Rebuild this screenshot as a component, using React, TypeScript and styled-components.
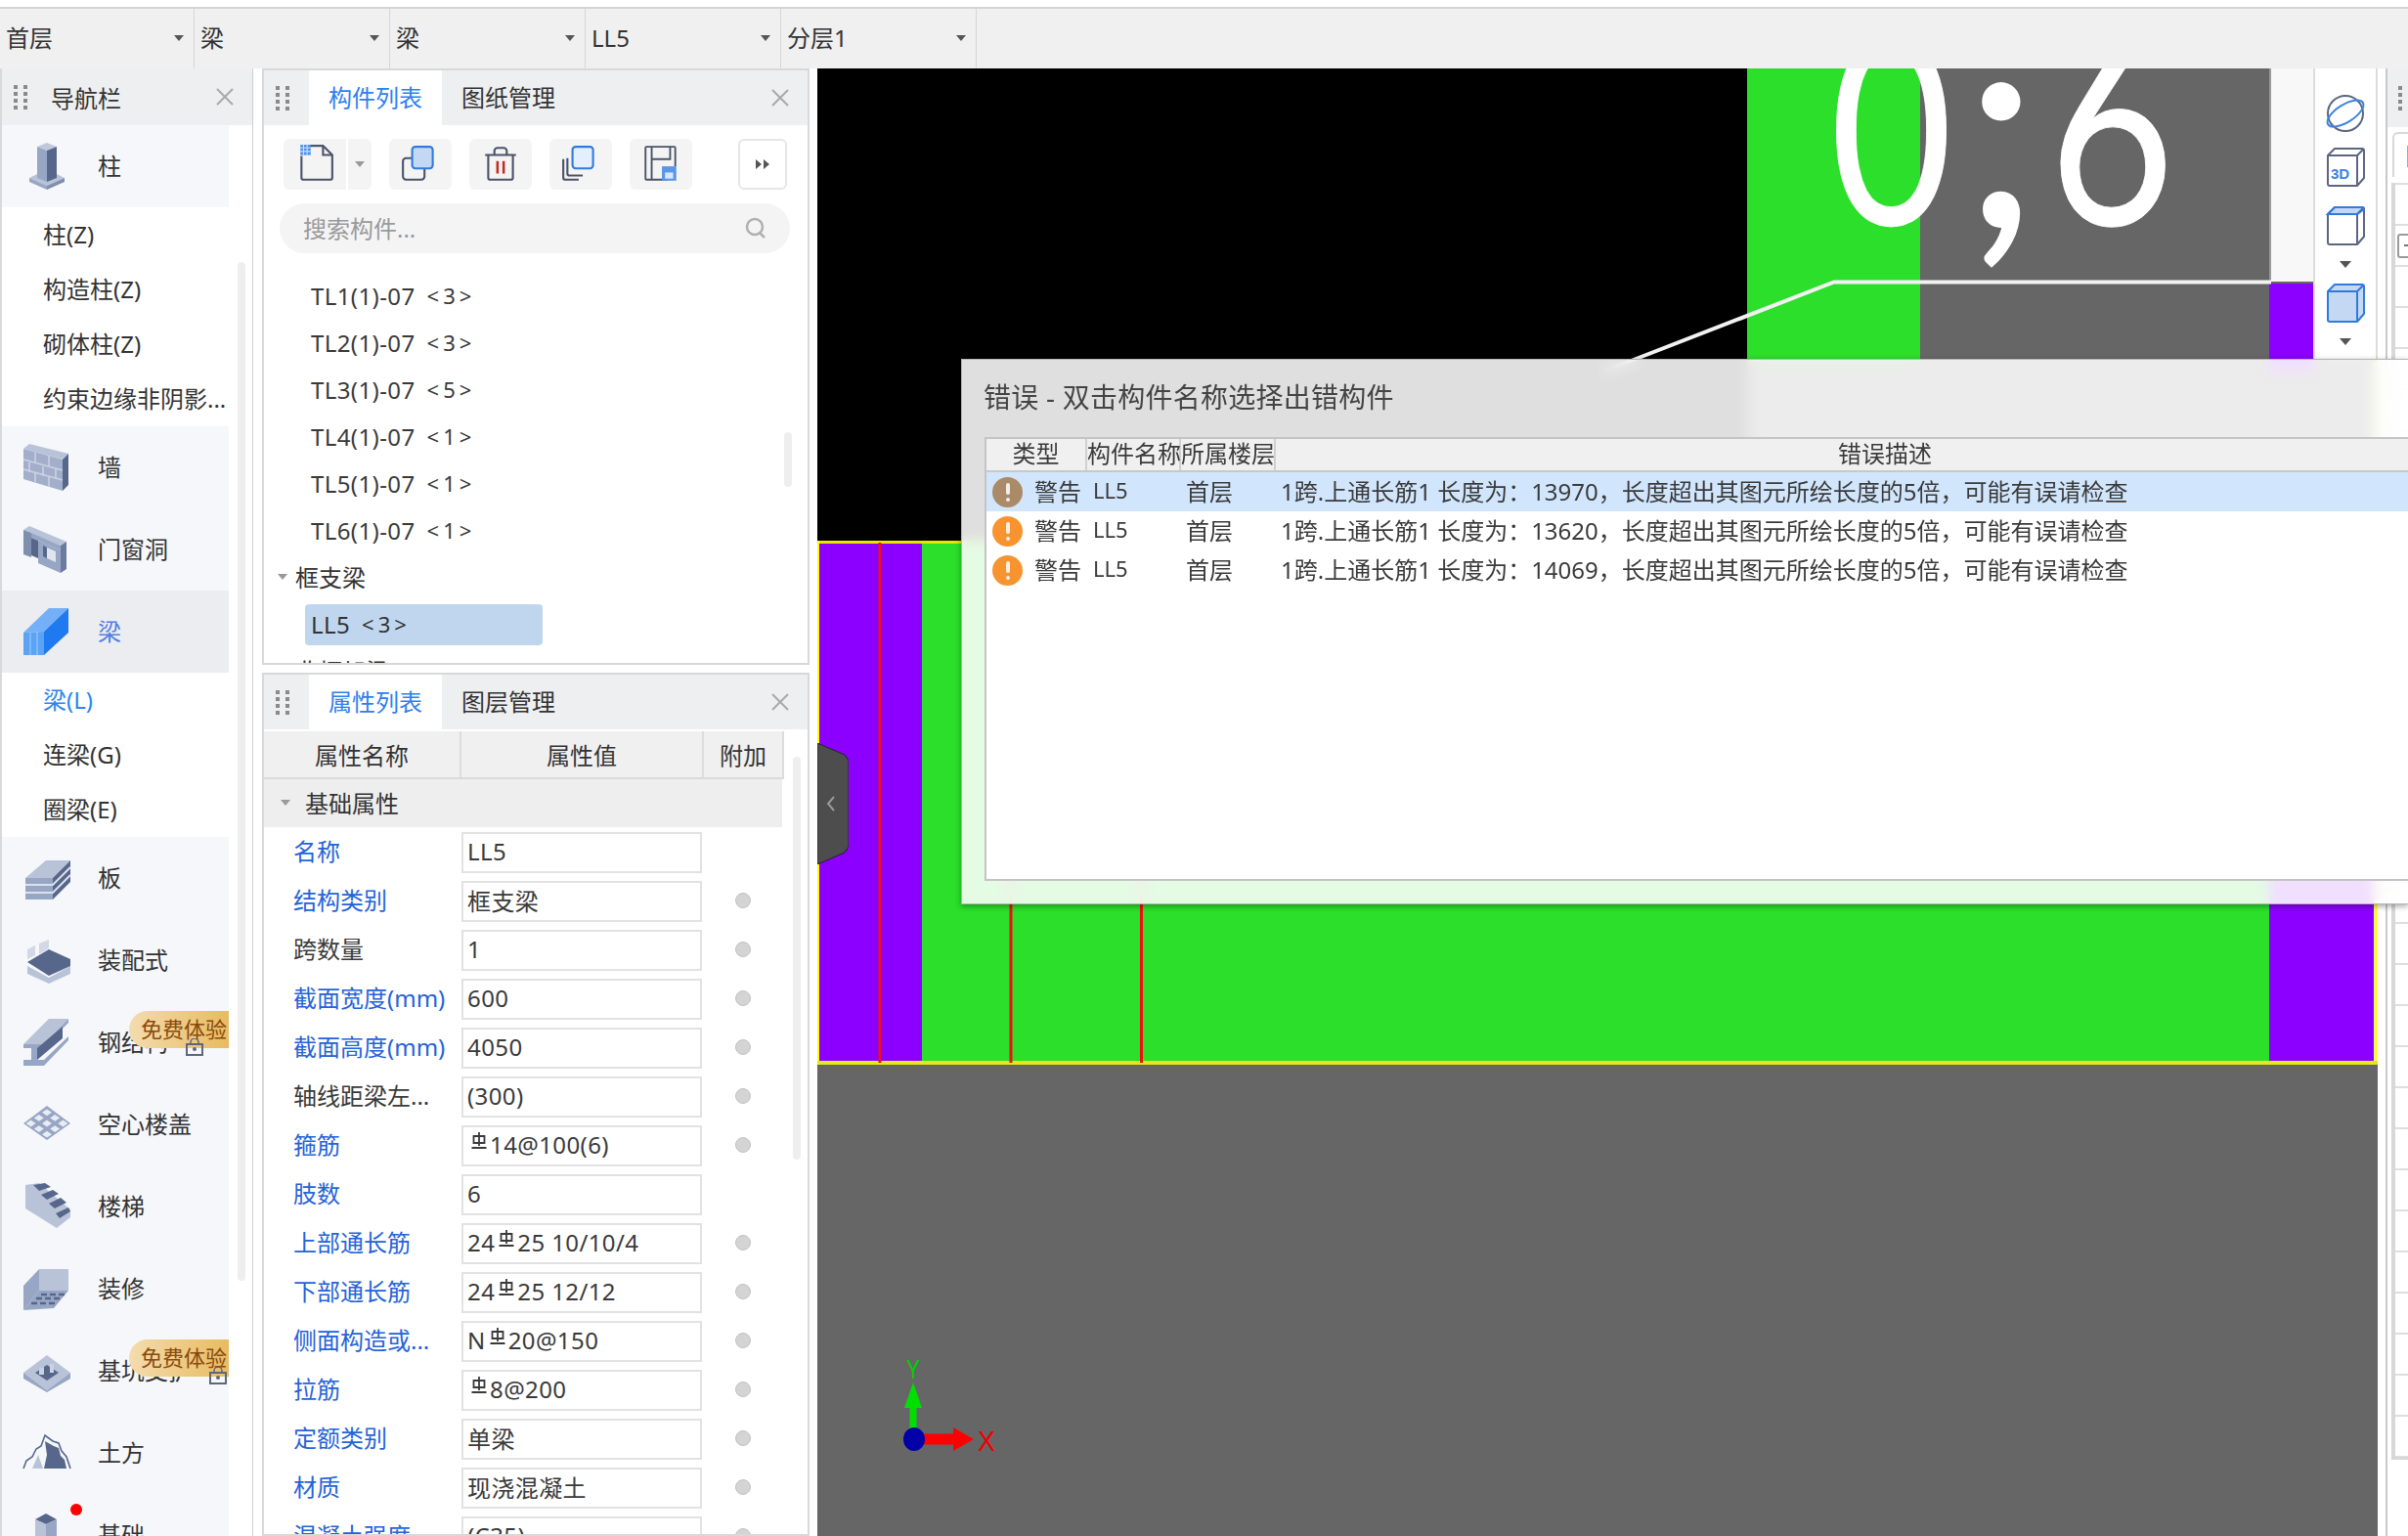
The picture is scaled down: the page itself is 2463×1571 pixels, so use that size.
import React from 'react';
import styled, { createGlobalStyle } from 'styled-components';

const Global = createGlobalStyle`
  html, body { margin: 0; padding: 0; width: 2463px; height: 1571px; overflow: hidden; background: #fff; }
  * { box-sizing: border-box; }
  body { font-family: "Noto Sans", "Noto Sans CJK SC", sans-serif; font-size: 24px; color: #333; }
`;

const Root = styled.div`position: relative; width: 2463px; height: 1571px; overflow: hidden; display: flex; flex-direction: column; padding-top: 7px;`;
const TopBar = styled.div`display: flex; height: 63px; flex: none; background: #f0f0f0; border-top: 2px solid #d4d4d4;`;
const Combo = styled.div`
  width: 200px; padding: 0 10px 0 6px; display: flex; align-items: center; justify-content: space-between;
  border-right: 1px solid #d6d6d6; line-height: 1; padding-bottom: 2px;
  &:first-child { width: 199px; }
`;
const Arrow = styled.i`
  display: block; flex: none; width: 0; height: 0; border-left: 5px solid transparent; border-right: 5px solid transparent; border-top: 6px solid ${p => p.$c || '#555'};
`;
const Body = styled.div`flex: 1; display: flex; min-height: 0; background: #fff;`;

/* nav */
const Nav = styled.div`position: relative; flex: none; width: 259px; border-left: 2px solid #d9d9d9; border-right: 1px solid #cfcfcf; overflow: hidden;`;
const PanelHead = styled.div`height: ${p => p.$h || 58}px; display: flex; align-items: center; background: #eeeff1; flex: none; position: relative;`;
const Dots = styled.div`display: grid; grid-template-columns: 4px 4px; gap: 3px 6px; width: 14px; margin-left: ${p => p.$ml || 12}px; i { display: block; width: 4px; height: 4px; background: #8a8a8a; }`;
const NavTitle = styled.div`margin-left: 24px;`;
const CloseX = styled.svg`position: absolute; right: ${p => p.$r || 18}px; top: 50%; margin-top: -10px; width: 20px; height: 20px;`;
const NavList = styled.div`width: 232px;`;
const NavItem = styled.div`
  position: relative; height: 84px; display: flex; align-items: center; padding-left: 22px;
  background: ${p => (p.$active ? '#ecedf0' : '#f5f7fa')};
  color: ${p => (p.$active ? '#4f80e6' : '#333')};
`;
const NavText = styled.span`padding-bottom: 3px; white-space: nowrap;`;
const NavIconBox = styled.svg`width: 48px; height: 48px; flex: none; margin-right: 28px; overflow: visible;`;
const SubRow = styled.div`height: 56px; display: flex; align-items: center; padding: 0 0 3px 42px; white-space: nowrap; color: ${p => (p.$active ? '#2d86ee' : '#333')};`;
const Badge = styled.div`
  position: absolute; left: 130px; top: 10px; right: 0; height: 38px; padding-left: 12px; z-index: 1; font-size: 22px;
  border-radius: 19px 0 0 19px; background: linear-gradient(90deg, #f3dcae, #e8bb60);
  color: #8b4a0c; line-height: 36px; white-space: nowrap; overflow: hidden;
`;
const LockIcon = styled.svg`position: relative; z-index: 2; width: 18px; height: 18px; flex: none; margin-left: 18px; margin-top: 10px;`;
const RedDot = styled.i`position: absolute; left: 70px; top: 10px; width: 12px; height: 12px; border-radius: 50%; background: #f00; z-index: 1;`;
const Thumb = styled.div`position: absolute; left: ${p => p.$x}px; top: ${p => p.$y}px; width: 8px; height: ${p => p.$h}px; border-radius: 4px; background: #eeeeee;`;

/* middle */
const MidColumn = styled.div`flex: none; width: 560px; margin-left: 9px; display: flex; flex-direction: column; gap: 8px;`;
const Panel = styled.div`
  position: relative; border: 2px solid #d8d8d8; ${p => (p.$fill ? 'flex: 1; min-height: 0;' : `height: ${p.$h}px; flex: none;`)}
  display: flex; flex-direction: column; overflow: hidden; background: #fff;
`;
const Tab = styled.div`
  width: 136px; height: 56px; display: flex; align-items: center; justify-content: center; padding-bottom: 3px;
  background: ${p => (p.$on ? '#fff' : 'transparent')}; color: ${p => (p.$on ? '#2f80ed' : '#333')};
`;
const Tabs = styled.div`display: flex; margin-left: 20px;`;
const Tools = styled.div`display: flex; flex: none; align-items: center; gap: 18px; padding: 14px 21px 0 20px;`;
const ToolBtn = styled.div`
  width: 64px; height: 52px; flex: none; background: #f4f4f5; border-radius: 6px; display: flex; align-items: center; justify-content: center;
`;
const SplitBtn = styled.div`display: flex; gap: 2px;`;
const DropPart = styled(ToolBtn)`width: 24px; border-radius: 0 6px 6px 0;`;
const MainPart = styled(ToolBtn)`border-radius: 6px 0 0 6px;`;
const MoreBtn = styled.div`margin-left: auto; width: 50px; height: 52px; border: 2px solid #e6e6e6; border-radius: 6px; display: flex; align-items: center; justify-content: center;`;
const ToolSvg = styled.svg`width: 42px; height: 42px;`;
const Search = styled.div`
  margin: 14px 0 0 16px; width: 522px; height: 51px; flex: none; border-radius: 26px; background: #f4f4f5; color: #9a9a9a;
  display: flex; align-items: center; justify-content: space-between; padding: 0 23px 2px 24px;
`;
const TreeList = styled.div`margin-top: 20px; flex: none; display: flex; flex-direction: column;`;
const TreeRow = styled.div`height: 48px; display: flex; align-items: center; padding: 0 0 2px 48px; white-space: nowrap; color: #3a3a3a; letter-spacing: .4px;`;
const Count = styled.span`margin-left: 12px; letter-spacing: 4px; font-size: 22px;`;
const TreeGroup = styled.div`height: 48px; display: flex; align-items: center; gap: 8px; padding: 0 0 3px 14px;`;
const Selected = styled.div`
  width: 243px; height: 42px; margin-left: 42px; display: flex; align-items: center; padding: 0 0 2px 6px; background: #c0d6ef; border-radius: 4px; letter-spacing: .4px;
`;
const SelectedWrap = styled.div`height: 48px; display: flex; align-items: center;`;

const GridHead = styled.div`display: grid; flex: none; grid-template-columns: 202px 248px 82px; height: 49px; margin-top: 2px; width: 532px; background: #f0f0f0; border-bottom: 2px solid #dadada;`;
const HeadCell = styled.div`display: flex; align-items: center; justify-content: center; border-right: 2px solid #dcdcdc;`;
const GroupRow = styled.div`height: 49px; flex: none; width: 530px; background: #eeeeee; display: flex; align-items: center; padding: 0 0 2px 17px; gap: 15px;`;
const PropList = styled.div`flex: none;`;
const PropRow = styled.div`display: grid; grid-template-columns: 202px 248px 82px; height: 50px; width: 532px; align-items: center;`;
const PropLabel = styled.div`padding: 0 0 3px 30px; white-space: nowrap; font-size: 24px; color: ${p => (p.$blue ? '#2563d8' : '#3a3a3a')};`;
const PropInput = styled.div`width: 246px; height: 42px; border: 2px solid #e2e2e2; background: #fff; display: flex; align-items: center; padding: 0 0 2px 4px; white-space: nowrap; margin-top: 1px; color: #3a3a3a; letter-spacing: .4px;`;
const Radio = styled.i`display: block; width: 16px; height: 16px; margin-left: 32px; border-radius: 50%; background: #d4d4d4; border: 1px solid #c2c2c2;`;
const Rebar = styled.svg`width: 18px; height: 20px; margin: -6px 2px 0 3px; flex: none;`;

/* canvas */
const Canvas = styled.div`position: relative; flex: none; width: 1596px; margin-left: 8px; overflow: hidden;`;
const CadSvg = styled.svg`display: block; width: 1596px; height: 1501px;`;
const ViewBar = styled.div`
  position: absolute; right: 0; top: 0; width: 66px; height: 297px; background: #fff;
  border-left: 2px solid #dcdcdc; border-right: 2px solid #dcdcdc;
  display: flex; flex-direction: column; align-items: center; padding-top: 25px;
`;
const ViewIcon = styled.svg`width: 42px; height: 42px; flex: none; margin-bottom: ${p => p.$mb || 0}px;`;
const ViewArrow = styled.i`display: block; flex: none; width: 0; height: 0; border-left: 6px solid transparent; border-right: 6px solid transparent; border-top: 7px solid #555; margin: 0 0 ${p => p.$mb || 0}px;`;
const Collapse = styled.svg`position: absolute; left: 0; top: 690px; width: 32px; height: 124px;`;

/* right dock */
const Dock = styled.div`flex: none; width: 31px; padding-left: 8px; height: 100%;`;
const DockInner = styled.div`height: 100%; border-left: 2px solid #c9c9cd; overflow: hidden;`;
const DockHead = styled.div`height: 60px; background: #eeeff1; display: flex; align-items: center; padding-left: 11px;`;
const DockDots = styled.div`display: grid; gap: 3px; i { display: block; width: 4px; height: 4px; background: #8a8a8a; }`;
const DockTab = styled.div`
  height: 46px; margin: 5px 0 0 5px; border: 2px solid #d8d8d8; border-right: 0; border-bottom: 0; border-radius: 6px 0 0 0; padding: 12px 0 0 13px;
  &::after { content: ""; display: block; width: 4px; height: 22px; background: #7fb0ee; }
`;
const DockRows = styled.div`margin: 6px 0 0 4px; border-left: 4px solid #d8d8d8; height: 1306px; overflow: hidden; border-bottom: 3px solid #d8d8d8;`;
const DockRow = styled.div`height: 42px; border-top: 2px solid #dedede; padding: 8px 0 0 2px;`;
const MiniBtn = styled.div`width: 30px; height: 25px; border: 2px solid #9a9a9a; border-radius: 3px; padding: 9px 0 0 5px; &::after { content: ""; display: block; width: 8px; height: 2px; background: #777; }`;

/* dialog */
const Dialog = styled.div`
  position: absolute; left: 983px; top: 367px; right: 0; height: 558px; display: flex; flex-direction: column; z-index: 5;
  background: rgba(255,255,255,.875); backdrop-filter: blur(7px);
  border: 1px solid #b5b5b5; border-right: 0; box-shadow: 0 2px 6px rgba(0,0,0,.35); padding: 0 0 23px 22px;
`;
const DialogTitle = styled.div`height: 79px; flex: none; display: flex; align-items: center; font-size: 28px; color: #444; padding-bottom: 6px; letter-spacing: .25px; white-space: pre;`;
const ErrTable = styled.div`flex: 1; min-height: 0; margin: 0 -30px 0 1px; border: 2px solid #c4c4c4; background: #fff; overflow: hidden;`;
const ErrHead = styled.div`display: grid; grid-template-columns: 103px 96px 97px 1fr; height: 32px; background: #f0f0f0; border-bottom: 2px solid #c8c8c8; box-sizing: content-box; line-height: 30px; text-align: center; color: #3a3a3a; white-space: nowrap;`;
const ErrHeadCell = styled.div`border-right: 2px solid #d0d0d0; &:last-child { border-right: 0; text-align: left; padding-left: 575px; }`;
const ErrRow = styled.div`display: flex; align-items: center; height: 40px; white-space: nowrap; background: ${p => (p.$sel ? '#d1e6fc' : '#fff')}; color: #3a3a3a; padding-bottom: 4px;`;
const WarnDot = styled.div`
  width: 31px; height: 31px; flex: none; margin: 4px 12px 0 6px; border-radius: 50%; background: ${p => (p.$sel ? '#aa8a68' : '#f79430')}; position: relative;
  &::before { content: ""; position: absolute; left: 14px; top: 6px; width: 4px; height: 12px; border-radius: 2px; background: #fff; opacity: .85; }
  &::after { content: ""; position: absolute; left: 14px; top: 21px; width: 4px; height: 4px; border-radius: 50%; background: #fff; opacity: .85; }
`;
const ErrType = styled.span`width: 60px; flex: none;`;
const ErrName = styled.span`width: 95px; flex: none; font-size: 22px;`;
const ErrFloor = styled.span`width: 97px; flex: none;`;

const L = '#b9c3d8', M = '#97a6c4', D = '#57678c';
const P = ({ p, f }: { p: string; f: string }) => <polygon points={p} fill={f} />;

const hollow = [] as React.ReactNode[];
for (let i = -1; i <= 1; i++) for (let j = -1; j <= 1; j++) {
  const cx = 24 + (i - j) * 8.2, cy = 23 + (i + j) * 5.6;
  hollow.push(<polygon key={i + '_' + j} points={`${cx - 5},${cy} ${cx},${cy - 3.4} ${cx + 5},${cy} ${cx},${cy + 3.4}`} fill="#e8ecf3" />);
}

const iconShapes: Record<string, React.ReactNode> = {
  column: <>
    <P p="6,36 14,32 24,37 34,32 42,36 24,44" f={L} /><P p="6,36 24,44 24,48 6,40" f={M} /><P p="24,44 42,36 42,40 24,48" f="#7f8fb0" />
    <P p="14,4 24,0 34,4 24,8" f="#c0c8da" /><P p="14,4 24,8 24,40 14,36" f={M} /><P p="24,8 34,4 34,36 24,40" f={D} />
  </>,
  wall: <>
    <P p="0,5 40,16 40,48 0,36" f="#a3aecb" /><P p="0,5 6,0 46,10 40,16" f={L} /><P p="40,16 46,10 46,42 40,48" f={D} />
    <path d="M0 16L40 27M0 26L40 37M12 9L12 19M26 12L26 23M6 19L6 29M20 23L20 33M33 26L33 36M12 29L12 39M26 33L26 44" stroke="#cbd2e2" strokeWidth="1.6" fill="none" />
  </>,
  door: <>
    <P p="0,4 6,0 44,16 38,20" f={L} /><P p="0,4 8,7 8,32 0,29" f="#7f8fb0" /><P p="8,7 38,20 38,25 8,12" f={M} /><P p="8,12 15,15 15,33 8,30" f={D} />
    <P p="15,15 38,25 38,48 15,38" f={M} /><P p="24,22 33,26 33,37 24,33" f="#dfe4ee" /><P p="20,20 24,22 24,33 20,31" f={D} /><P p="38,20 44,16 44,44 38,48" f="#6b7ba0" />
  </>,
  beam: <>
    <P p="0,25 26,0 46,0 21,24" f="#74b0f7" /><P p="21,24 46,0 46,25 21,48" f="#1f7af0" /><P p="0,25 21,24 21,48 0,48" f="#5ba3f5" />
    <path d="M7 25V48M14 24V48" stroke="#8cc0f9" strokeWidth="1.5" />
  </>,
  slab: <>
    <P p="2,24 23,6 48,6 30,24" f={L} /><P p="2,24 30,24 30,46 2,46" f={M} /><P p="30,24 48,6 48,28 30,46" f={D} />
    <path d="M2 31H30L48 13M2 39H30L48 21" stroke="#dbe0ea" strokeWidth="2" fill="none" />
  </>,
  assembly: <>
    <P p="4,13 12,9 12,19 4,23" f="#d2d8e5" /><P p="16,7 26,3 26,12 16,18" f="#d2d8e5" />
    <P p="4,30 26,42 48,30 48,38 26,48 4,38" f={L} /><P p="4,26 26,13 48,23 48,30 26,40" f={D} />
  </>,
  steel: <>
    <P p="0,26 26,0 46,0 20,26" f={L} /><P p="0,26 20,26 20,30 0,30" f={M} /><P p="20,26 46,0 46,4 20,30" f={M} />
    <P p="8,30 14,30 14,42 8,42" f={M} /><P p="14,30 40,8 40,20 14,42" f={D} /><P p="0,42 21,42 46,18 46,22 21,48 0,48" f={M} />
  </>,
  hollow: <><P p="0,23 24,5 48,23 24,40" f={M} />{hollow}</>,
  stairs: <>
    <P p="2,2 16,0 48,27 48,35 34,46 2,26" f={L} />
    <P p="10,2 22,0 28,4 16,8" f={D} /><P p="18,12 30,7 36,11 24,17" f={D} /><P p="26,21 38,15 44,20 32,26" f={D} /><P p="33,31 46,25 48,29 37,36" f={D} />
  </>,
  decor: <>
    <P p="16,4 46,4 46,26 16,26" f={L} /><P p="0,21 16,4 16,26 0,46" f={M} /><P p="0,46 16,26 46,26 31,44" f={M} />
    <path d="M8 39H14M17 39H23M26 39H32M13 34H19M22 34H28M31 34H37M18 30H24M27 30H33M36 30H42" stroke={D} strokeWidth="2.4" />
  </>,
  pit: <>
    <P p="0,26 24,8 48,26 24,44" f={L} /><P p="0,26 24,44 24,46 0,32" f={M} /><P p="24,44 48,26 48,32 24,46" f={M} />
    <P p="12,26 24,18 36,26 24,34" f={D} /><P p="16,22 21,20 21,28 16,28" f="#ccd2e0" /><P p="27,17 31,17 31,26 27,26" f="#ccd2e0" />
  </>,
  earth: <>
    <path d="M0 40L3 32L9 28L13 20L18 17L22 6L30 12L36 14L39 22L44 28L48 40" fill="none" stroke={D} strokeWidth="1.6" />
    <P p="22,12 31,17 36,19 38,27 42,31 44,40 21,40 24,26" f={D} /><P p="9,40 15,26 20,40" f={L} />
  </>,
  base: <><P p="12,8 23,2 34,8 23,13" f={D} /><P p="12,8 23,13 23,30 12,30" f={L} /><P p="23,13 34,8 34,30 23,30" f={M} /></>,
};

const NavIcon = ({ k }: { k: string }) => <NavIconBox viewBox="0 0 48 48">{iconShapes[k]}</NavIconBox>;
const Lock = () => (
  <LockIcon viewBox="0 0 18 18"><path d="M5 6V4a4 4 0 0 1 8 0v2" fill="none" stroke="#5c6680" strokeWidth="1.5" /><rect x="1" y="6" width="16" height="11" fill="none" stroke="#5c6680" strokeWidth="2" /><circle cx="9" cy="11" r="2" fill="#5c6680" /></LockIcon>
);

const DragDots = ({ ml }: { ml?: number }) => <Dots $ml={ml}>{Array.from({ length: 8 }, (_, i) => <i key={i} />)}</Dots>;
const Close = ({ r }: { r?: number }) => <CloseX $r={r} viewBox="0 0 20 20"><path d="M2 2L18 18M18 2L2 18" stroke="#a9a9a9" strokeWidth="2" /></CloseX>;
const R = () => <Rebar viewBox="0 0 17 20"><path d="M3 4H14V11H3ZM8.5 0V14M1 16H16" fill="none" stroke="#3a3a3a" strokeWidth="1.8" /></Rebar>;

const NewIcon = () => (
  <ToolSvg viewBox="0 0 40 40">
    <path d="M15 2H28L37 11V33a2 2 0 0 1-2 2H9a2 2 0 0 1-2-2V12" fill="none" stroke="#4a5368" strokeWidth="2" /><path d="M28 2V11H37" fill="none" stroke="#4a5368" strokeWidth="2" />
    <rect x="6" y="1" width="10" height="10" fill="#4c8ee8" /><path d="M6 4H16M6 7.5H16M9 1V11M12.5 1V11" stroke="#cfe1f8" strokeWidth="1" />
  </ToolSvg>
);
const CopyIcon = () => (
  <ToolSvg viewBox="0 0 40 40"><rect x="3" y="14" width="21" height="21" rx="3" fill="none" stroke="#4a5368" strokeWidth="2" /><rect x="12" y="3" width="20" height="21" rx="3" fill="#c4d8f4" stroke="#2f7bdc" strokeWidth="2" /></ToolSvg>
);
const TrashIcon = () => (
  <ToolSvg viewBox="0 0 40 40"><path d="M5 11H35M14 11V7a3 3 0 0 1 3-3h6a3 3 0 0 1 3 3v4M8 11V33a2 2 0 0 0 2 2H30a2 2 0 0 0 2-2V11" fill="none" stroke="#4a5368" strokeWidth="2" /><path d="M17 17V29M23 17V29" stroke="#c8281e" strokeWidth="2.4" /></ToolSvg>
);
const StackIcon = () => (
  <ToolSvg viewBox="0 0 40 40"><path d="M3 15V33a2 2 0 0 0 2 2H18M7 14V29a2 2 0 0 0 2 2H22" fill="none" stroke="#4a5368" strokeWidth="2" /><rect x="12" y="3" width="20" height="21" rx="3" fill="#e3effc" stroke="#2f7bdc" strokeWidth="2" /></ToolSvg>
);
const SaveIcon = () => (
  <ToolSvg viewBox="0 0 40 40"><path d="M26 35H6a1 1 0 0 1-1-1V4a1 1 0 0 1 1-1H33a1 1 0 0 1 1 1V22M11 35V15H29V3M11 15V3" fill="none" stroke="#4a5368" strokeWidth="1.800" /><rect x="21" y="22" width="14" height="14" fill="#5a95e6" /><rect x="24" y="28" width="8" height="6" fill="#d8e6f9" /></ToolSvg>
);

const triDown = <Arrow $c="#999" />;

const rows: { label: string; blue?: boolean; value: React.ReactNode; radio?: boolean }[] = [
  { label: '名称', blue: true, value: 'LL5' },
  { label: '结构类别', blue: true, value: '框支梁', radio: true },
  { label: '跨数量', value: '1', radio: true },
  { label: '截面宽度(mm)', blue: true, value: '600', radio: true },
  { label: '截面高度(mm)', blue: true, value: '4050', radio: true },
  { label: '轴线距梁左...', value: '(300)', radio: true },
  { label: '箍筋', blue: true, value: <><R />14@100(6)</>, radio: true },
  { label: '肢数', blue: true, value: '6' },
  { label: '上部通长筋', blue: true, value: <>24<R />25 10/10/4</>, radio: true },
  { label: '下部通长筋', blue: true, value: <>24<R />25 12/12</>, radio: true },
  { label: '侧面构造或...', blue: true, value: <>N<R />20@150</>, radio: true },
  { label: '拉筋', blue: true, value: <><R />8@200</>, radio: true },
  { label: '定额类别', blue: true, value: '单梁', radio: true },
  { label: '材质', blue: true, value: '现浇混凝土', radio: true },
  { label: '混凝土强度', blue: true, value: '(C35)', radio: true },
];

const tree = [['TL1(1)-07', '<3>'], ['TL2(1)-07', '<3>'], ['TL3(1)-07', '<5>'], ['TL4(1)-07', '<1>'], ['TL5(1)-07', '<1>'], ['TL6(1)-07', '<1>']];

const errors = [
  { sel: true, n: '13970' },
  { sel: false, n: '13620' },
  { sel: false, n: '14069' },
];

const Cube = ({ top, front, side, stroke }: { top?: string; front?: string; side?: string; stroke: string }) => (
  <>
    <path d="M3 9L10 2H40V32L33 40H3Z" fill={front || 'none'} />
    <path d="M3 9L10 2H40L33 9Z" fill={top || 'none'} />
    <path d="M33 9L40 2V32L33 40Z" fill={side || 'none'} />
    <path d="M33 9V40H5a2 2 0 0 1-2-2V9ZM3 9L10 2H38a2 2 0 0 1 2 2V32L33 40M33 9L40 2" fill="none" stroke={stroke} strokeWidth="2" strokeLinejoin="round" />
  </>
);

// The drawing's own coordinates are page pixels, shifted to the canvas origin.
const CadDrawing = () => (
  <CadSvg viewBox="836 70 1596 1501">
    <rect x="836" y="70" width="1596" height="1501" fill="#666" />
    <rect x="836" y="70" width="951" height="483" fill="#000" />
    <rect x="1787" y="70" width="177" height="300" fill="#2bdf2b" />
    <rect x="1964" y="70" width="357" height="300" fill="#666" />
    <rect x="2321" y="70" width="2" height="218" fill="#999" />
    <rect x="2323" y="70" width="44" height="218" fill="#f8f8f8" />
    <rect x="2321" y="290" width="46" height="90" fill="#8b00ff" />
    <path d="M1640 380L1876 288.500H2323" fill="none" stroke="#f2f2f2" strokeWidth="4" />
    <g fontFamily="Lato" fill="#fff" stroke="#fff">
      <text x="1872" y="230" fontSize="270" strokeWidth="1" textLength="125" lengthAdjust="spacingAndGlyphs">0</text>
      <text x="2008" y="232" fontSize="298" strokeWidth="2" textLength="78" lengthAdjust="spacingAndGlyphs">;</text>
      <text x="2096" y="230" fontSize="270" strokeWidth="1" textLength="128" lengthAdjust="spacingAndGlyphs">6</text>
    </g>
    <rect x="836" y="555" width="107" height="532" fill="#8b00ff" />
    <rect x="943" y="555" width="1378" height="532" fill="#2bdf2b" />
    <rect x="2321" y="555" width="107" height="532" fill="#8b00ff" />
    <rect x="836" y="553" width="1596" height="3" fill="#e6e600" />
    <rect x="836" y="553" width="2" height="535" fill="#ff0" />
    <rect x="2428" y="370" width="4" height="718" fill="#ffff40" />
    <rect x="836" y="1085" width="1596" height="4" fill="#e6e61a" />
    <path d="M900 555V1087M1034 555V1087M1167.500 555V1087" stroke="#f01010" strokeWidth="3" />
    <path d="M934 1472V1432" stroke="#00e000" strokeWidth="7" /><polygon points="934,1414 925,1440 943,1440" fill="#00e000" />
    <path d="M934 1472H976" stroke="#f00" strokeWidth="11" /><polygon points="996,1472 975,1460 975,1484" fill="#f00" />
    <ellipse cx="935" cy="1472" rx="11" ry="12" fill="#0000a8" />
    <text x="927" y="1410" fontFamily="Liberation Sans" fontSize="28" fill="#00d000" textLength="14" lengthAdjust="spacingAndGlyphs">Y</text>
    <text x="1000" y="1484" fontFamily="Liberation Sans" fontSize="30" fill="#f00000" textLength="18" lengthAdjust="spacingAndGlyphs">X</text>
  </CadSvg>
);

export default function App() {
  return (
    <Root>
      <Global />
      <TopBar>
        {['首层', '梁', '梁', 'LL5', '分层1'].map((t, i) => <Combo key={i}><span>{t}</span><Arrow /></Combo>)}
      </TopBar>
      <Body>
        <Nav>
          <PanelHead>
            <DragDots />
            <NavTitle>导航栏</NavTitle>
            <Close r={18} />
          </PanelHead>
          <NavList>
            <NavItem><NavIcon k="column" /><NavText>柱</NavText></NavItem>
            <SubRow>柱(Z)</SubRow><SubRow>构造柱(Z)</SubRow><SubRow>砌体柱(Z)</SubRow><SubRow>约束边缘非阴影...</SubRow>
            <NavItem><NavIcon k="wall" /><NavText>墙</NavText></NavItem>
            <NavItem><NavIcon k="door" /><NavText>门窗洞</NavText></NavItem>
            <NavItem $active><NavIcon k="beam" /><NavText>梁</NavText></NavItem>
            <SubRow $active>梁(L)</SubRow><SubRow>连梁(G)</SubRow><SubRow>圈梁(E)</SubRow>
            <NavItem><NavIcon k="slab" /><NavText>板</NavText></NavItem>
            <NavItem><NavIcon k="assembly" /><NavText>装配式</NavText></NavItem>
            <NavItem><NavIcon k="steel" /><NavText>钢结构</NavText><Lock /><Badge>免费体验</Badge></NavItem>
            <NavItem><NavIcon k="hollow" /><NavText>空心楼盖</NavText></NavItem>
            <NavItem><NavIcon k="stairs" /><NavText>楼梯</NavText></NavItem>
            <NavItem><NavIcon k="decor" /><NavText>装修</NavText></NavItem>
            <NavItem><NavIcon k="pit" /><NavText>基坑支护</NavText><Lock /><Badge>免费体验</Badge></NavItem>
            <NavItem><NavIcon k="earth" /><NavText>土方</NavText></NavItem>
            <NavItem><NavIcon k="base" /><NavText>基础</NavText><RedDot /></NavItem>
          </NavList>
          <Thumb $x={241} $y={198} $h={1042} />
        </Nav>
        <MidColumn>
          <Panel $h={610}>
            <PanelHead $h={56}>
              <DragDots ml={12} />
              <Tabs><Tab $on>构件列表</Tab><Tab>图纸管理</Tab></Tabs>
              <Close r={18} />
            </PanelHead>
            <Tools>
              <SplitBtn><MainPart><NewIcon /></MainPart><DropPart>{triDown}</DropPart></SplitBtn>
              <ToolBtn><CopyIcon /></ToolBtn><ToolBtn><TrashIcon /></ToolBtn><ToolBtn><StackIcon /></ToolBtn><ToolBtn><SaveIcon /></ToolBtn>
              <MoreBtn><svg width="16" height="12" viewBox="0 0 16 12"><path d="M1 1L7 6L1 11ZM9 1L15 6L9 11Z" fill="#555" /></svg></MoreBtn>
            </Tools>
            <Search>搜索构件...
              <svg width="24" height="24" viewBox="0 0 24 24"><circle cx="11" cy="11" r="8" fill="none" stroke="#b0b0b0" strokeWidth="2.500" /><path d="M16 17L21 22" stroke="#b0b0b0" strokeWidth="2.500" /></svg>
            </Search>
            <TreeList>
              {tree.map(([a, b]) => <TreeRow key={a}>{a}<Count>{b}</Count></TreeRow>)}
              <TreeGroup>{triDown}框支梁</TreeGroup>
              <SelectedWrap><Selected>LL5<Count>{'<3>'}</Count></Selected></SelectedWrap>
              <TreeGroup>{triDown}非框架梁</TreeGroup>
            </TreeList>
            <Thumb $x={532} $y={370} $h={56} />
          </Panel>
          <Panel $fill>
            <PanelHead $h={56}>
              <DragDots ml={12} />
              <Tabs><Tab $on>属性列表</Tab><Tab>图层管理</Tab></Tabs>
              <Close r={18} />
            </PanelHead>
            <GridHead><HeadCell>属性名称</HeadCell><HeadCell>属性值</HeadCell><HeadCell>附加</HeadCell></GridHead>
            <GroupRow>{triDown}基础属性</GroupRow>
            <PropList>
              {rows.map(r => (
                <PropRow key={r.label}>
                  <PropLabel $blue={r.blue}>{r.label}</PropLabel>
                  <PropInput>{r.value}</PropInput>
                  {r.radio ? <Radio /> : <span />}
                </PropRow>
              ))}
            </PropList>
            <Thumb $x={541} $y={84} $h={412} />
          </Panel>
        </MidColumn>
        <Canvas>
          <CadDrawing />
          <Collapse viewBox="0 0 32 124"><polygon points="0,0 28,12 32,18 32,106 28,112 0,124" fill="#4d4d4d" stroke="#222" strokeWidth="1" /><path d="M17 55L11 62L17 69" fill="none" stroke="#9a9a9a" strokeWidth="2" /></Collapse>
          <ViewBar>
            <ViewIcon viewBox="0 0 42 42" $mb={13}><circle cx="21" cy="21" r="18" fill="none" stroke="#5c6680" strokeWidth="2" /><ellipse cx="21" cy="21" rx="21" ry="9" transform="rotate(-32 21 21)" fill="none" stroke="#3d84e0" strokeWidth="2" /></ViewIcon>
            <ViewIcon viewBox="0 0 42 42" $mb={18}><Cube stroke="#5c6680" /><text x="6" y="33" fontSize="15" fontWeight="700" fill="#3d84e0" fontFamily="Liberation Sans">3D</text></ViewIcon>
            <ViewIcon viewBox="0 0 42 42" $mb={15}><Cube top="#c4d8f4" stroke="#5c6680" /><path d="M3 9L10 2H38a2 2 0 0 1 2 2L33 9Z" fill="none" stroke="#2f7bdc" strokeWidth="2" /></ViewIcon>
            <ViewArrow $mb={15} />
            <ViewIcon viewBox="0 0 42 42" $mb={15}><Cube top="#c4d8f4" front="#c4d8f4" side="#c4d8f4" stroke="#2f7bdc" /></ViewIcon>
            <ViewArrow />
          </ViewBar>
        </Canvas>
        <Dock>
          <DockInner>
            <DockHead><DockDots>{[0, 1, 2, 3].map(i => <i key={i} />)}</DockDots></DockHead>
            <DockTab />
            <DockRows>
              {Array.from({ length: 32 }, (_, i) => <DockRow key={i}>{i === 1 ? <MiniBtn /> : null}</DockRow>)}
            </DockRows>
          </DockInner>
        </Dock>
      </Body>
      <Dialog>
        <DialogTitle>错误 - 双击构件名称选择出错构件</DialogTitle>
        <ErrTable>
          <ErrHead>
            <ErrHeadCell>类型</ErrHeadCell><ErrHeadCell>构件名称</ErrHeadCell><ErrHeadCell>所属楼层</ErrHeadCell><ErrHeadCell>错误描述</ErrHeadCell>
          </ErrHead>
          {errors.map(e => (
            <ErrRow key={e.n} $sel={e.sel}>
              <WarnDot $sel={e.sel} />
              <ErrType>警告</ErrType>
              <ErrName>LL5</ErrName>
              <ErrFloor>首层</ErrFloor>
              <span>1跨.上通长筋1 长度为：{e.n}，长度超出其图元所绘长度的5倍，可能有误请检查</span>
            </ErrRow>
          ))}
        </ErrTable>
      </Dialog>
    </Root>
  );
}
